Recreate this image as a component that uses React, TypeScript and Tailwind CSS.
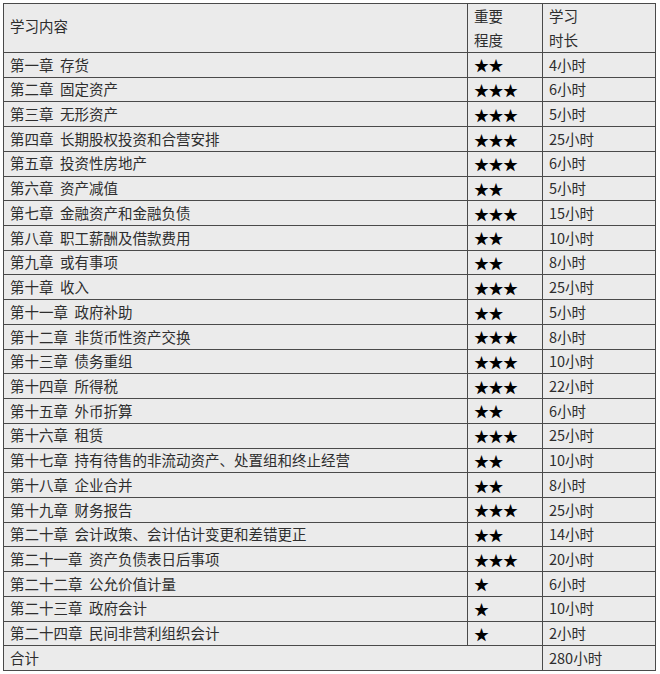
import React from "react";

const rows: [string, number, string][] = [
  ["第一章  存货", 2, "4小时"],
  ["第二章  固定资产", 3, "6小时"],
  ["第三章  无形资产", 3, "5小时"],
  ["第四章  长期股权投资和合营安排", 3, "25小时"],
  ["第五章  投资性房地产", 3, "6小时"],
  ["第六章  资产减值", 2, "5小时"],
  ["第七章  金融资产和金融负债", 3, "15小时"],
  ["第八章  职工薪酬及借款费用", 2, "10小时"],
  ["第九章  或有事项", 2, "8小时"],
  ["第十章  收入", 3, "25小时"],
  ["第十一章  政府补助", 2, "5小时"],
  ["第十二章  非货币性资产交换", 3, "8小时"],
  ["第十三章  债务重组", 3, "10小时"],
  ["第十四章  所得税", 3, "22小时"],
  ["第十五章  外币折算", 2, "6小时"],
  ["第十六章  租赁", 3, "25小时"],
  ["第十七章  持有待售的非流动资产、处置组和终止经营", 2, "10小时"],
  ["第十八章  企业合并", 2, "8小时"],
  ["第十九章  财务报告", 3, "25小时"],
  ["第二十章  会计政策、会计估计变更和差错更正", 2, "14小时"],
  ["第二十一章  资产负债表日后事项", 3, "20小时"],
  ["第二十二章  公允价值计量", 1, "6小时"],
  ["第二十三章  政府会计", 1, "10小时"],
  ["第二十四章  民间非营利组织会计", 1, "2小时"],
];

const cell = "border border-[#4a4a4a] px-[6px] align-middle whitespace-pre leading-none";

export default function App() {
  return (
    <div className="w-[660px] h-[674px] bg-white pt-[3px] pl-[3px] overflow-hidden">
      <table
        className="table-fixed border-collapse bg-[#ebebeb] text-[#2e2e2e] text-[14.5px]"
        style={{ width: 652, fontFamily: '"Noto Sans CJK SC", "Noto Sans", sans-serif' }}
      >
        <colgroup>
          <col style={{ width: 464 }} />
          <col style={{ width: 75 }} />
          <col style={{ width: 113 }} />
        </colgroup>
        <tbody>
          <tr className="h-[49px]">
            <td className={`${cell} pb-[4px]`}>学习内容</td>
            <td className={`${cell} !leading-[24px] !align-top`}>
              重要
              <br />
              程度
            </td>
            <td className={`${cell} !leading-[24px] !align-top`}>
              学习
              <br />
              时长
            </td>
          </tr>
          {rows.map(([name, stars, hours]) => (
            <tr key={name} className="h-[24.72px]">
              <td className={cell}>{name}</td>
              <td className={`${cell} text-[15px] text-black tracking-[-0.5px]`}>
                {"★".repeat(stars)}
              </td>
              <td className={cell}>{hours}</td>
            </tr>
          ))}
          <tr className="h-[24.72px]">
            <td className={cell} colSpan={2}>
              合计
            </td>
            <td className={cell}>280小时</td>
          </tr>
        </tbody>
      </table>
    </div>
  );
}
